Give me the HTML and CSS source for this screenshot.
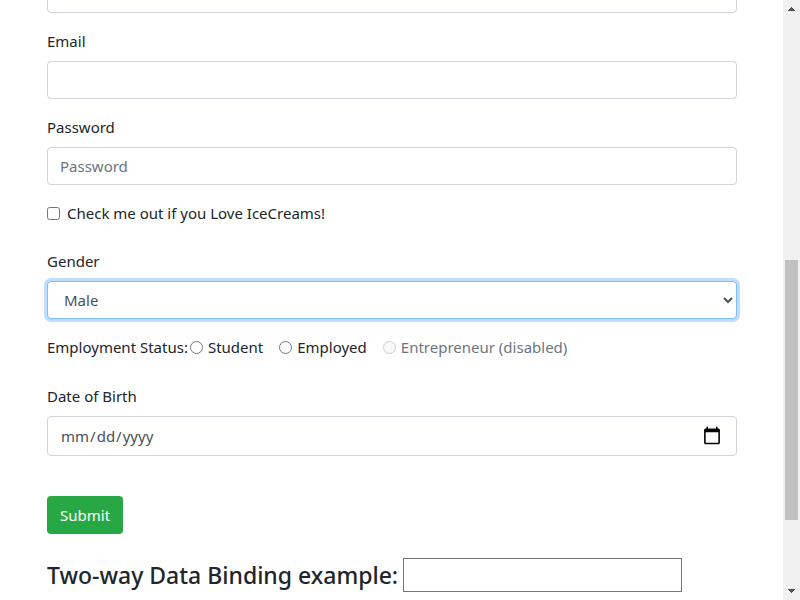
FILE: index.html
```html
<!DOCTYPE html>
<html lang="en">
<head>
<meta charset="utf-8">
<meta name="viewport" content="width=device-width, initial-scale=1">
<title>Form</title>
<link rel="stylesheet" href="styles.css">
</head>
<body>
<div class="viewport">
  <main class="content">
    <form class="form">
      <div class="group">
        <input class="control" type="text" aria-label="Name">
      </div>
      <div class="group">
        <label class="label" for="email">Email</label>
        <input class="control" type="email" id="email">
      </div>
      <div class="group">
        <label class="label" for="password">Password</label>
        <input class="control" type="password" id="password" placeholder="Password">
      </div>
      <div class="check">
        <input class="tick" type="checkbox" id="love">
        <label for="love">Check me out if you Love IceCreams!</label>
      </div>
      <div class="group">
        <label class="label" for="gender">Gender</label>
        <select class="control select focused" id="gender">
          <option>Male</option>
          <option>Female</option>
        </select>
      </div>
      <div class="radios" role="radiogroup" aria-labelledby="status">
        <span id="status">Employment Status:</span>
        <span class="option">
          <input class="tick" type="radio" name="status" id="student">
          <label for="student">Student</label>
        </span>
        <span class="option">
          <input class="tick" type="radio" name="status" id="employed">
          <label for="employed">Employed</label>
        </span>
        <span class="option disabled">
          <input class="tick" type="radio" name="status" id="entrepreneur" disabled>
          <label for="entrepreneur">Entrepreneur (disabled)</label>
        </span>
      </div>
      <div class="group">
        <label class="label" for="dob">Date of Birth</label>
        <input class="control date" type="date" id="dob">
      </div>
      <button class="submit" type="submit">Submit</button>
    </form>
    <h4 class="binding">
      <label for="binding">Two-way Data Binding example:</label>
      <input class="binding-input" type="text" id="binding">
    </h4>
  </main>
  <div class="scrollbar" aria-hidden="true">
    <svg class="arrow" viewBox="0 0 17 17" shape-rendering="crispEdges"><path fill="#505050" d="M8 7h1v1h1v1h1v1h1v1H5v-1h1V9h1V8h1z"/></svg>
    <div class="track"><div class="thumb"></div></div>
    <svg class="arrow" viewBox="0 0 17 17" shape-rendering="crispEdges"><path fill="#505050" d="M5 6h7v1h-1v1h-1v1H9v1H8V9H7V8H6V7H5z"/></svg>
  </div>
</div>
</body>
</html>
```
FILE: styles.css
```css
* {
  box-sizing: border-box;
}

body {
  margin: 0;
  background: #fff;
  color: #212529;
  font-family: "Noto Sans", "Open Sans", sans-serif;
  font-size: 15px;
  line-height: 24px;
}

.viewport {
  display: grid;
  grid-template-columns: 1fr 17px;
  height: 100vh;
  overflow: hidden;
}

.content {
  min-width: 0;
  padding: 0 46px 0 47px;
}

/* The page is scrolled part-way through the first field. */
.form {
  margin-top: -25px;
}

.group {
  margin-bottom: 16px;
}

.label {
  display: block;
  margin-bottom: 8px;
}

.control {
  display: block;
  width: 100%;
  height: 38px;
  padding: 6px 12px;
  border: 1px solid #ced4da;
  border-radius: 4px;
  background: #fff;
  color: #495057;
  font: inherit;
}

.control::placeholder {
  color: #6c757d;
}

.select {
  padding: 6px 0 6px 12px;
}

.focused {
  border-color: #80bdff;
  outline: 0;
  box-shadow: 0 0 0 3px #bfdeff;
}

.tick {
  width: 13px;
  height: 13px;
  margin: 0;
}

.check {
  display: flex;
  align-items: center;
  gap: 7px;
  margin-bottom: 24px;
}

.radios {
  display: flex;
  align-items: center;
  margin-bottom: 25px;
}

.option {
  display: flex;
  align-items: center;
  gap: 5px;
  margin: 0 14px 0 2px;
}

.disabled {
  color: #6c757d;
}

.date {
  height: 40px;
}

.date::-webkit-calendar-picker-indicator {
  width: 20px;
  height: 20px;
  padding: 2px;
  background-size: contain;
}

.submit {
  margin-top: 24px;
  height: 38px;
  padding: 6px 13px;
  border: 0;
  border-radius: 4px;
  background: #28a745;
  color: #fff;
  font: inherit;
}

.binding {
  display: flex;
  align-items: center;
  gap: 5px;
  margin: 24px 0 8px;
  font-size: 23px;
  font-weight: 500;
  line-height: 34px;
}

.binding-input {
  width: 279px;
  height: 34px;
  padding: 1px 2px;
  border: 1px solid #767676;
  background: #fff;
  font: inherit;
}

.scrollbar {
  display: flex;
  flex-direction: column;
  background: #f0f0f0;
}

.arrow {
  width: 17px;
  height: 17px;
}

.track {
  flex: 1;
  padding: 243px 2px 0;
}

.thumb {
  height: 260px;
  background: #c0c0c0;
}
```
